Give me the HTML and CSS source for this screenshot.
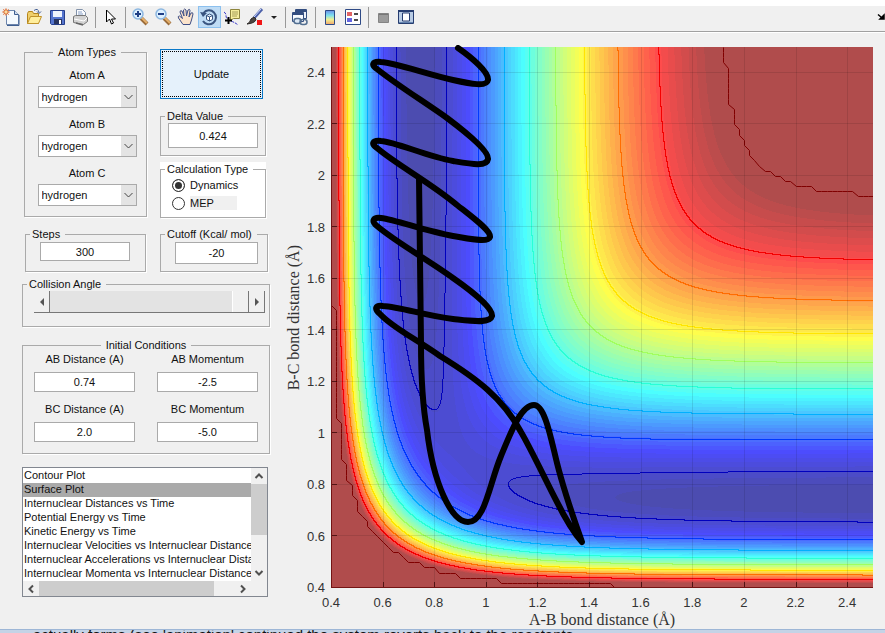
FILE: index.html
```html
<!DOCTYPE html>
<html lang="en">
<head>
<meta charset="utf-8">
<title>Reaction Dynamics</title>
<link rel="stylesheet" href="styles.css">
</head>
<body>
<header class="toolbar">
  <button class="tool" aria-label="New"><svg viewBox="0 0 18 18"><path d="M4.500 2.500h8l4 4v10h-12z" fill="#f5fafe" stroke="#6d86ad"/><path d="M12.500 2.500v4h4" fill="#cfdcec" stroke="#3f5f90"/><path d="M5 17.500h12V7" fill="none" stroke="#3f5f90"/><path d="M4 0v8M0 4h8M1 1l6 6M7 1L1 7" stroke="#e89a72"/><circle cx="4" cy="4" r="2.200" fill="#f9dca0" stroke="#d9642e"/></svg></button>
  <button class="tool" aria-label="Open"><svg viewBox="0 0 18 18"><path d="M2.500 15.500V5.500l1-2h4l1 2h5v10z" fill="#efcf6b" stroke="#b5851b"/><path d="M2.500 15.500l3-7h11l-3 7z" fill="#ffee9c" stroke="#c0922a"/><path d="M9 2.500q4-3 5 2m-2-1l2 2 2-2" fill="none" stroke="#425d93"/></svg></button>
  <button class="tool" aria-label="Save"><svg viewBox="0 0 18 18"><path d="M2.500 2.500h14v14h-13l-1-1z" fill="#5575cf" stroke="#273f8c"/><path d="M5 3h9v6H5z" fill="#eef3fd"/><path d="M6 11h8v5H6z" fill="#28345f"/><path d="M11 12h2v4h-2z" fill="#fff"/></svg></button>
  <button class="tool" aria-label="Print"><svg viewBox="0 0 18 18"><path d="M5.500 8V1.500h6l3 3V9" fill="#fafcff" stroke="#8393aa"/><path d="M7 4h4M7 6h5" stroke="#8aa1c7"/><path d="M2.500 8.500l2-1h10l2 2v4l-4 3-10-2z" fill="#d2d2d2" stroke="#777"/><path d="M3 11l10 2 3-3" fill="none" stroke="#fff"/><path d="M5 15l7 2" stroke="#666" stroke-width="1.500"/></svg></button>
  <span class="sep"></span>
  <button class="tool" aria-label="Select"><svg viewBox="0 0 18 18"><path d="M5.500 2v12l3-3 2 5 2-1-2-4h4z" fill="#fff" stroke="#000"/></svg></button>
  <span class="sep"></span>
  <button class="tool" aria-label="Zoom in"><svg viewBox="0 0 18 18"><path d="M10 10l6 6" stroke="#9a6b3a" stroke-width="4"/><path d="M10 9l6 6" stroke="#e5b06b" stroke-width="2"/><circle cx="7" cy="6" r="5" fill="#dcf0ff" stroke="#8bb6e0" stroke-width="1.500"/><path d="M4 6h6M7 3v6" stroke="#1f3f86" stroke-width="2"/></svg></button>
  <button class="tool" aria-label="Zoom out"><svg viewBox="0 0 18 18"><path d="M10 10l6 6" stroke="#9a6b3a" stroke-width="4"/><path d="M10 9l6 6" stroke="#e5b06b" stroke-width="2"/><circle cx="7" cy="6" r="5" fill="#dcf0ff" stroke="#8bb6e0" stroke-width="1.500"/><path d="M4 6h6" stroke="#1f3f86" stroke-width="2"/></svg></button>
  <button class="tool" aria-label="Pan"><svg viewBox="0 0 18 18"><path d="M6 16.500L1.500 10q-1-2 1-2l3 2.500L3 4q0-2 2-1l2 5-.5-6q1-2 2.500 0l.5 6 1.500-6q2-1.500 2 .5L12 9l2-4q2-1 2 1l-1.500 6-1.500 4.500z" fill="#fbe3cb" stroke="#3f4f86" stroke-width="1"/></svg></button>
  <button class="tool tool-active" aria-label="Rotate 3D"><svg viewBox="0 0 18 18"><path d="M3.500 5A7 7 0 1 1 3 13" fill="none" stroke="#3a5580" stroke-width="2"/><path d="M0 4l7 1-4 4z" fill="#3a5580"/><path d="M6.500 7.500l3-1.500 3 1.500v4l-3 1.500-3-1.500zM6.500 7.500l3 1.500 3-1.500M9.500 9v4" fill="#fff" stroke="#3a5580"/></svg></button>
  <button class="tool" aria-label="Data cursor"><svg viewBox="0 0 18 18"><path d="M1 4q2 1 2 4t5 5 7 4" fill="none" stroke="#3434c8" stroke-dasharray="3 1"/><path d="M7.500 1.500h9v9h-6l-3 2z" fill="#f5ed9c" stroke="#8d843c"/><path d="M9 4h6M9 6h6M9 8h5" stroke="#a79e5a"/><path d="M2 12.500h7M5.500 9v7" stroke="#000" stroke-width="2"/></svg></button>
  <button class="tool" aria-label="Brush"><svg viewBox="0 0 18 18"><path d="M8 10l8-9" stroke="#4a5ea8" stroke-width="3"/><path d="M8 9l7-8" stroke="#cfdcff"/><path d="M1 16q3-1 4-5l3-2 2 2q0 4-9 5z" fill="#4b4540" stroke="#2d2926"/><path d="M11 12h5v5h-5z" fill="#f01515"/></svg></button>
  <button class="drop" aria-label="Brush colours"><svg viewBox="0 0 8 8"><path d="M1 3h6L4 6z" fill="#222"/></svg></button>
  <span class="sep"></span>
  <button class="tool" aria-label="Link plots"><svg viewBox="0 0 18 18"><path d="M4.500 1.500h11v9h-11z" fill="#eef3fb" stroke="#344e80"/><path d="M4 3h12" stroke="#344e80" stroke-width="2"/><path d="M1.500 4.500h11v9h-11z" fill="#f8fbff" stroke="#344e80"/><path d="M1 6h12" stroke="#344e80" stroke-width="2"/><rect x="3" y="10.500" width="7" height="5" rx="2.500" fill="#dce8f5" stroke="#536f91" stroke-width="1.500"/><rect x="9" y="11.500" width="7" height="5" rx="2.500" fill="none" stroke="#536f91" stroke-width="1.500"/></svg></button>
  <span class="sep"></span>
  <button class="tool" aria-label="Insert colorbar"><svg viewBox="0 0 18 18"><defs><linearGradient id="bar" x2="0" y2="1"><stop offset="0" stop-color="#6c8ee8"/><stop offset=".35" stop-color="#7ddfee"/><stop offset=".65" stop-color="#eff093"/><stop offset="1" stop-color="#f2a36b"/></linearGradient></defs><path d="M4.500 2.500h9v14h-9z" fill="url(#bar)" stroke="#2f4a86"/></svg></button>
  <button class="tool" aria-label="Insert legend"><svg viewBox="0 0 18 18"><path d="M1.500 1.500h15v15h-15z" fill="#fff" stroke="#2f4a86"/><path d="M3 4h5v4H3z" fill="#e06464"/><path d="M3 10h5v4H3z" fill="#6464e0"/><path d="M10 6h4M10 12h4" stroke="#111" stroke-width="1.500"/></svg></button>
  <span class="sep"></span>
  <button class="tool" aria-label="Hide plot tools"><svg viewBox="0 0 18 18"><path d="M4.500 5.500h10v9h-10z" fill="#9b9b9b" stroke="#848484"/><path d="M5 6.500h9" stroke="#777"/></svg></button>
  <button class="tool" aria-label="Show plot tools"><svg viewBox="0 0 18 18"><path d="M1.500 2.500h15v13h-15z" fill="#b8cbe4" stroke="#263d70"/><path d="M1 3h16" stroke="#263d70" stroke-width="2"/><path d="M5.500 5h7v8h-7z" fill="#fff" stroke="#263d70"/><path d="M2 14.500h14" stroke="#6484b0"/></svg></button>
  <button class="dock" aria-label="Dock figure"><svg viewBox="0 0 8 8"><path d="M1 1.500l3 2.500M3 6h4V2z" stroke="#000" stroke-width="1.500" fill="#000"/></svg></button>
</header>

<main class="figure">
  <form class="controls">
    <div class="pair">
      <fieldset class="group atoms">
        <legend class="centered">Atom Types</legend>
        <label for="atomA">Atom A</label>
        <div class="combo"><select id="atomA"><option>hydrogen</option></select><svg viewBox="0 0 15 20"><path d="M3.500 8l4 4 4-4" fill="none" stroke="#444"/></svg></div>
        <label for="atomB">Atom B</label>
        <div class="combo"><select id="atomB"><option>hydrogen</option></select><svg viewBox="0 0 15 20"><path d="M3.500 8l4 4 4-4" fill="none" stroke="#444"/></svg></div>
        <label for="atomC">Atom C</label>
        <div class="combo"><select id="atomC"><option>hydrogen</option></select><svg viewBox="0 0 15 20"><path d="M3.500 8l4 4 4-4" fill="none" stroke="#444"/></svg></div>
      </fieldset>
      <div class="side">
        <button type="button" class="update">Update</button>
        <fieldset class="group delta">
          <legend><label for="delta">Delta Value</label></legend>
          <input id="delta" type="text" value="0.424">
        </fieldset>
        <div class="calc">
          <fieldset class="group">
            <legend>Calculation Type</legend>
            <label class="choice"><input type="radio" name="calc" checked><span>Dynamics</span></label>
            <label class="choice"><input type="radio" name="calc"><span class="shaded">MEP</span></label>
          </fieldset>
        </div>
      </div>
    </div>
    <div class="pair second">
      <fieldset class="group steps">
        <legend><label for="steps">Steps</label></legend>
        <input id="steps" type="text" value="300">
      </fieldset>
      <fieldset class="group cutoff">
        <legend><label for="cutoff">Cutoff (Kcal/ mol)</label></legend>
        <input id="cutoff" type="text" value="-20">
      </fieldset>
    </div>
    <fieldset class="group angle">
      <legend><label for="angle">Collision Angle</label></legend>
      <div class="slider">
        <button type="button" aria-label="Decrease"><svg viewBox="0 0 8 8"><path d="M6 0v8L2 4z" fill="#555"/></svg></button>
        <input id="angle" type="range" min="0" max="180" value="180">
        <button type="button" aria-label="Increase"><svg viewBox="0 0 8 8"><path d="M2 0v8l4-4z" fill="#555"/></svg></button>
      </div>
    </fieldset>
    <fieldset class="group initial">
      <legend class="centered">Initial Conditions</legend>
      <div class="cells">
        <div class="cell"><label for="abd">AB Distance (A)</label><input id="abd" type="text" value="0.74"></div>
        <div class="cell"><label for="abm">AB Momentum</label><input id="abm" type="text" value="-2.5"></div>
        <div class="cell"><label for="bcd">BC Distance (A)</label><input id="bcd" type="text" value="2.0"></div>
        <div class="cell"><label for="bcm">BC Momentum</label><input id="bcm" type="text" value="-5.0"></div>
      </div>
    </fieldset>
    <div class="listbox">
      <select size="8" aria-label="Plot type">
        <option>Contour Plot</option>
        <option selected>Surface Plot</option>
        <option>Internuclear Distances vs Time</option>
        <option>Potential Energy vs Time</option>
        <option>Kinetic Energy vs Time</option>
        <option>Internuclear Velocities vs Internuclear Distance</option>
        <option>Internuclear Accelerations vs Internuclear Distance</option>
        <option>Internuclear Momenta vs Internuclear Distance</option>
      </select>
      <div class="vbar"><svg viewBox="0 0 16 16"><path d="M4.500 10L8 6.500l3.500 3.500" fill="none" stroke="#505050" stroke-width="2"/></svg><i></i><svg viewBox="0 0 16 16"><path d="M4.500 6L8 9.500 11.500 6" fill="none" stroke="#505050" stroke-width="2"/></svg></div>
      <div class="hbar"><svg viewBox="0 0 16 16"><path d="M10 4.500L6.500 8l3.500 3.500" fill="none" stroke="#505050" stroke-width="2"/></svg><i></i><svg viewBox="0 0 16 16"><path d="M6 4.500L9.500 8 6 11.500" fill="none" stroke="#505050" stroke-width="2"/></svg></div>
    </div>
  </form>

  <section class="chart">
    <div class="ylabel"><span>B-C bond distance (Å)</span></div>
    <ol class="yticks"><li>0.4</li><li>0.6</li><li>0.8</li><li>1</li><li>1.2</li><li>1.4</li><li>1.6</li><li>1.8</li><li>2</li><li>2.2</li><li>2.4</li></ol>
    <div class="plot">
      <canvas id="surface" width="542" height="541"></canvas>
      <svg class="overlay" viewBox="0 0 542 541" preserveAspectRatio="none">
        <path class="trajectory" d="M127,1 C140,10 158,25 157,33 C156,40 140,37 122,33 C95,27 65,16 50,15 C41,14 40,18 46,22 C66,38 92,54 116,71 C140,89 158,105 157,112 C156,120 140,117 122,114 C95,109 65,95 50,94 C41,93 40,97 46,101 C66,118 100,136 126,158 C145,173 160,184 159,190 C157,196 140,192 122,189 C95,184 65,173 50,171 C42,170 40,174 46,179 C66,196 99,214 122,231 C145,247 162,262 161,269 C159,277 140,274 122,272 C95,269 70,260 52,259 C44,258 43,262 49,267 C62,281 82,290 109,309 C145,331 172,351 190,385 C200,402 216,436 226,455 C234,471 243,486 251,495 C244,475 234,448 226,416 C220,392 214,358 203,358 C190,358 180,385 170,409 C158,438 154,475 137,475 C120,475 102,435 96,383 C90,350 90,310 90,296 L88,131"/>
      </svg>
    </div>
    <ol class="xticks"><li>0.4</li><li>0.6</li><li>0.8</li><li>1</li><li>1.2</li><li>1.4</li><li>1.6</li><li>1.8</li><li>2</li><li>2.2</li><li>2.4</li></ol>
    <div class="xlabel">A-B bond distance (Å)</div>
  </section>
</main>
<footer class="behind"><p>actually forms (see 'animation' continued the system reverts back to the reactants.</p></footer>
<script src="plot.js"></script>
</body>
</html>
```

FILE: styles.css
```css
* { box-sizing: border-box; }
body {
  margin: 0;
  min-height: 100vh;
  display: flex;
  flex-direction: column;
  background: #f0f0f0;
  color: #111;
  font: 11px/14px "Liberation Sans", Arial, sans-serif;
  border-top: 6px solid #fff;
  overflow: hidden;
}
button, input, select { font: inherit; color: inherit; margin: 0; }
ol, p { margin: 0; padding: 0; list-style: none; }

.toolbar {
  display: flex;
  align-items: center;
  height: 27px;
  padding-bottom: 4px;
  border-bottom: 1px solid #fff;
  box-shadow: inset 0 -1px #a0a0a0;
}
.tool {
  flex: none;
  width: 23px;
  height: 22px;
  padding: 2px;
  border: 0;
  background: none;
}
.tool svg { display: block; width: 18px; height: 18px; }
.tool-active { background: #bfdcf5; box-shadow: inset 0 0 0 1px #8cc0ee; }
.drop { width: 15px; height: 22px; padding: 3px; border: 0; background: none; }
.drop svg, .dock svg { display: block; width: 8px; height: 8px; }
.sep { flex: none; width: 1px; height: 21px; margin: 0 3px; background: #999; }
.dock { margin-left: auto; width: 8px; height: 8px; padding: 0; border: 0; background: none; }

.figure { flex: 1; display: flex; align-items: flex-start; }

.controls {
  flex: none;
  width: 270px;
  padding: 13px 0 0 22px;
  display: flex;
  flex-direction: column;
}
.group {
  min-width: 0;
  margin: 0;
  padding: 0;
  border: 1px solid #aaa;
  box-shadow: 1px 1px #fff;
}
.group legend { height: 13px; line-height: 13px; padding: 0 5px 0 2px; margin-left: 4px; }
.group legend.centered { margin: 0 auto; padding: 0 5px; }
input[type="text"] {
  display: block;
  height: 25px;
  padding: 0;
  border: 1px solid #aaa;
  background: #fff;
  text-align: center;
}
.pair { display: flex; justify-content: space-between; align-items: flex-start; padding: 0 4px 0 2px; }
.atoms { width: 123px; height: 171px; padding-left: 3px; }
.atoms > label { display: block; margin-top: 9px; text-align: center; }
.combo { position: relative; width: 99px; height: 22px; margin: 4px auto 0; }
.combo select {
  display: block;
  width: 100%;
  height: 100%;
  padding: 0 3px;
  border: 1px solid #aaa;
  border-radius: 0;
  background: #fff;
  appearance: none;
}
.combo svg { position: absolute; right: 1px; top: 1px; width: 15px; height: 20px; background: #e4e4e4; pointer-events: none; }

.side { width: 106px; display: flex; flex-direction: column; padding-top: 3px; }
.update {
  width: 103px;
  height: 50px;
  border: 1px solid #0a78c8;
  background: #e5f1fb;
  outline: 1px dotted #000;
  outline-offset: -3px;
}
.delta { height: 46px; margin-top: 11px; }
.delta input { width: 90px; margin: 0 auto; }
.calc { margin-top: 6px; padding-top: 1px; background: #fff; }
.calc .group { height: 55px; }
.choice { display: flex; align-items: center; height: 18px; padding-left: 11px; }
.choice input {
  appearance: none;
  width: 13px;
  height: 13px;
  margin-right: 5px;
  border: 1px solid #333;
  border-radius: 50%;
  background: #fff;
}
.choice input:checked { background: #333; box-shadow: inset 0 0 0 2px #fff; }
.shaded { width: 47px; background: #f0f0f0; }

.second { margin-top: 10px; padding: 0 2px 0 3px; }
.steps, .cutoff { height: 44px; }
.steps { width: 121px; }
.cutoff { width: 108px; }
.steps input { width: 90px; height: 19px; margin: 1px 0 0 14px; }
.cutoff input { width: 83px; height: 22px; margin: 1px 0 0 14px; }

.angle { height: 49px; margin-top: 6px; }
.slider { display: flex; height: 22px; margin: 0 4px 0 11px; border-bottom: 1px solid #777; }
.slider button { width: 16px; padding: 0 4px; border: 0; border-right: 1px solid #777; background: #f0f0f0; }
.slider button svg { display: block; width: 8px; height: 8px; }
.slider input { flex: 1; min-width: 0; height: 21px; appearance: none; background: #e3e3e3; }
.slider input::-webkit-slider-thumb { appearance: none; width: 17px; height: 21px; border-right: 1px solid #777; border-left: 1px solid #fff; background: #f0f0f0; }

.initial { height: 115px; margin-top: 12px; }
.cells { display: grid; grid-template-columns: 101px 101px; justify-content: space-between; row-gap: 10px; padding: 0 11px; }
.cell { text-align: center; }
.cell label { display: block; margin-bottom: 6px; }
.cell input { width: 100%; height: 20px; }

.listbox {
  display: grid;
  grid-template: 113px 15px / 1fr 16px;
  width: 246px;
  margin-top: 13px;
  border: 1px solid #828790;
}
.listbox select { width: 100%; height: 113px; border: 0; border-radius: 0; outline: 0; padding: 1px 0 0; overflow: hidden; background: #fff; }
.listbox select::-webkit-scrollbar { display: none; }
.listbox option { height: 14px; min-height: 14px; padding: 0 0 0 1px; line-height: 14px; color: #111; }
.listbox option:checked { background: #aaa linear-gradient(#aaa, #aaa); color: #111; }
.vbar, .hbar { display: flex; }
.vbar svg, .hbar svg { flex: none; width: 16px; height: 16px; }
.vbar { flex-direction: column; }
.vbar i { height: 51px; margin-bottom: auto; background: #cdcdcd; }
.hbar i { width: 175px; margin-right: auto; background: #cdcdcd; }

.chart {
  flex: 1;
  min-width: 0;
  display: grid;
  grid-template-columns: 16px 29px 1fr;
  padding: 14px 12px 0 16px;
  color: #333;
}
.ylabel, .xlabel { font: 16px/18px "Liberation Serif", serif; }
.ylabel span { writing-mode: vertical-rl; transform: rotate(180deg); }
.ylabel { display: flex; align-items: center; justify-content: center; }
.yticks, .xticks { display: flex; font-size: 13px; line-height: 16px; }
.yticks { flex-direction: column-reverse; padding-right: 6px; text-align: right; }
.yticks li { flex: none; height: calc(100% * 2 / 21); display: flex; align-items: center; justify-content: flex-end; transform: translateY(50%); }
.xticks { grid-column: 3; padding-top: 7px; }
.xticks li { flex: none; width: calc(100% * 2 / 21); text-align: center; transform: translateX(-50%); }
.xlabel { grid-column: 3; text-align: center; }
.plot { position: relative; }
.plot canvas { display: block; width: 100%; height: auto; }
.overlay { position: absolute; inset: 0; width: 100%; height: 100%; overflow: visible; }
.trajectory { fill: none; stroke: #000; stroke-width: 6; stroke-linejoin: round; stroke-linecap: round; }

.behind { height: 4px; overflow: hidden; border-top: 1px solid #9db6d6; background: #c4d3e6; }
.behind p { padding-left: 33px; font-size: 15px; line-height: 9px; white-space: nowrap; }
```

FILE: plot.js
```js
// LEPS potential energy surface of collinear H + H2,
// energies in units of the H2 well depth
const BETA = 1.95, RE = 0.743, SATO = 0.18, CUTOFF = -0.198;
const LEVELS = [0, 1, 2, 3, 4, 5, 6, 7].map(k => -0.963 + 0.0944 * k);

function terms(r) {
  const u = Math.exp(-BETA * (r - RE));
  return [
    ((3 + SATO) * u * u - (2 + 6 * SATO) * u) / 4,
    ((1 + 3 * SATO) * u * u - (6 + 2 * SATO) * u) / 4
  ];
}
function energy(a, b) {
  const [q1, j1] = terms(a), [q2, j2] = terms(b), [q3, j3] = terms(a + b);
  const s = Math.sqrt(((j1 - j2) ** 2 + (j2 - j3) ** 2 + (j1 - j3) ** 2) / 2);
  return Math.min(CUTOFF, (q1 + q2 + q3 - s) / (1 + SATO));
}
function jet(t) {
  return [3, 2, 1].map(c => 255 * Math.max(0, Math.min(1, 1.5 - Math.abs(4 * t - c))));
}

const canvas = document.getElementById("surface");
const ctx = canvas.getContext("2d");
const W = canvas.width, H = canvas.height;
const X = r => (r - 0.4) / 2.1 * W;
const Y = r => H - (r - 0.4) / 2.1 * H;
const fraction = v => Math.max(0, Math.min(1, (v + 1) / (1 + CUTOFF)));
const levelOf = v => LEVELS.filter(l => v >= l).length;

const field = [];
for (let y = 0; y <= H; y++) {
  const row = [];
  for (let x = 0; x <= W; x++) {
    const v = energy(0.4 + (x + 0.5) / W * 2.1, 0.4 + (H - y - 0.5) / H * 2.1);
    row.push({ v, level: levelOf(v) });
  }
  field.push(row);
}
const image = ctx.createImageData(W, H);
for (let y = 0; y < H; y++) {
  for (let x = 0; x < W; x++) {
    const here = field[y][x];
    const band = Math.min(63, Math.floor(fraction(here.v) * 64));
    let colour = jet(Math.min(0.985, (band + 1) / 64)).map(c => c * 0.7 + 76);
    const next = [field[y][x + 1], field[y + 1][x]].find(n => n.level !== here.level);
    if (next) colour = jet(fraction(LEVELS[Math.max(here.level, next.level) - 1]) + 1 / 64);
    image.data.set([...colour, 255], (y * W + x) * 4);
  }
}
ctx.putImageData(image, 0, 0);

// Edge of the plateau, traced on the 0.02 Å sampling grid
const node = i => 0.4 + 0.02 * i;
const isFlat = (i, j) => energy(node(i), node(j)) >= CUTOFF;
ctx.strokeStyle = "#800000";
ctx.lineWidth = 1;
ctx.beginPath();
for (let i = 0; i < 105; i++) {
  for (let j = 0; j < 105; j++) {
    const inside = [[i, j], [i + 1, j], [i + 1, j + 1], [i, j + 1]].filter(c => isFlat(...c));
    let ends = null;
    if (inside.length === 2) ends = inside;
    if (inside.length === 3) {
      ends = inside.filter(c => inside.filter(o => Math.abs(o[0] - c[0]) + Math.abs(o[1] - c[1]) === 1).length === 1);
    }
    if (ends) {
      const [p, q] = ends.map(c => [Math.round(X(node(c[0]))) + 0.5, Math.round(Y(node(c[1]))) + 0.5]);
      ctx.moveTo(...p);
      ctx.lineTo(...q);
    }
  }
}
ctx.stroke();

// Grid, ticks and axis lines
for (let k = 0; k <= 10; k++) {
  const gx = Math.round(X(0.4 + 0.2 * k)), gy = Math.round(Y(0.4 + 0.2 * k)) - 1;
  ctx.fillStyle = "rgba(0,0,0,.1)";
  ctx.fillRect(gx, 0, 1, H);
  ctx.fillRect(0, gy, W, 1);
  ctx.fillStyle = "rgba(50,0,0,.7)";
  ctx.fillRect(gx, H - 6, 1, 6);
  ctx.fillRect(0, gy, 6, 1);
}
ctx.fillStyle = "#741414";
ctx.fillRect(0, 0, 1, H);
ctx.fillRect(0, H - 1, W, 1);
```
